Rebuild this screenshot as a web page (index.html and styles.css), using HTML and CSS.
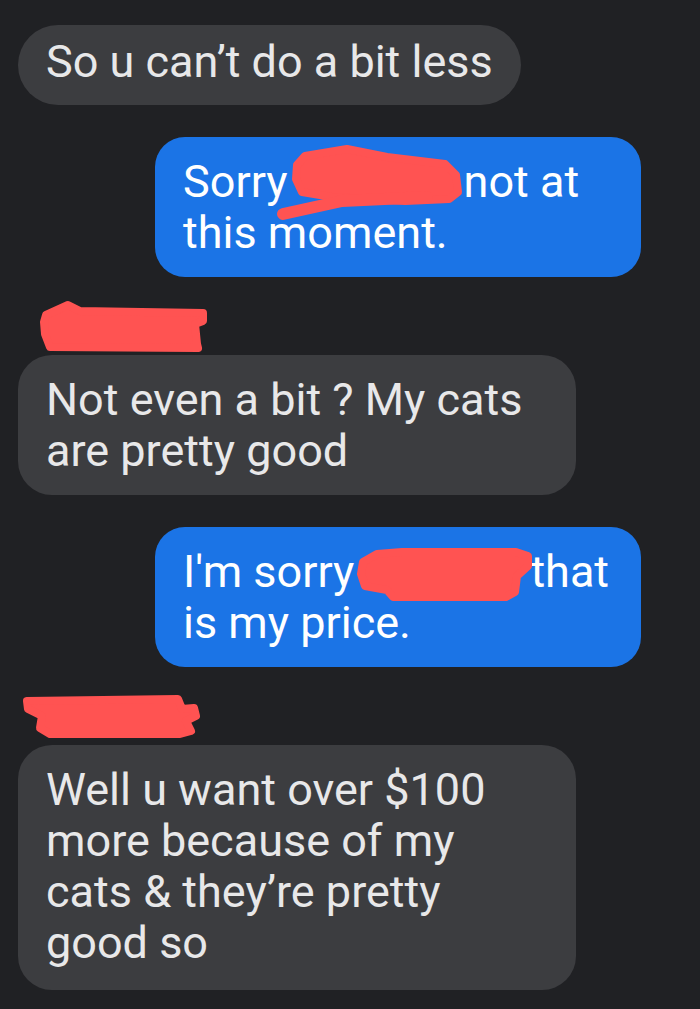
FILE: index.html
```html
<!DOCTYPE html>
<html lang="en">

<head>
    <meta charset="UTF-8">
    <meta name="viewport" content="width=device-width, initial-scale=1.0">
    <title>Messages</title>
    <link rel="stylesheet" href="styles.css">
</head>

<body>
    <div class="thread">
        <div class="msg in first">So u can’t do a bit less</div>

        <div class="msg out">Sorry<span class="redact r1"><svg viewBox="0 0 200 80" width="200" height="80">
                    <polygon points="25,21 33,12 75,5 115,13 173,20 184,31 186,48 177,55 133,57 60,53 30,48 24,35" />
                    <polyline points="11,70 70,57 155,53" fill="none" stroke-width="12" />
                </svg></span>not at<br>this moment.</div>

        <div class="sender s1"><svg viewBox="0 0 170 55" width="170" height="55">
                <polygon points="6,15 28,5 40,11 163,13 163,21 155,24 157,44 158,48 10,47 5,34 4,22" />
            </svg></div>

        <div class="msg in wide">Not even a bit ? My cats<br>are pretty good</div>

        <div class="msg out">I'm sorry<span class="redact r2"><svg viewBox="0 0 195 66" width="195" height="66">
                    <polygon points="17,21 31,13 56,11 170,11 182,15 182,25 171,35 169,51 160,56 47,56 41,49 19,45 15,33" />
                </svg></span>that<br>is my price.</div>

        <div class="sender s2"><svg viewBox="0 0 185 53" width="185" height="53">
                <polygon points="7,9 158,7 162,17 174,16 176,24 166,29 171,39 160,42 30,42 20,36 22,24 8,17" />
            </svg></div>

        <div class="msg in wide last">Well u want over $100<br>more because of my<br>cats &amp; they’re pretty<br>good so</div>
    </div>
</body>

</html>
```

FILE: styles.css
```css
body,
html {
    margin: 0;
    padding: 0;
    background-color: #202124;
    font-family: Roboto, "Noto Sans", sans-serif;
}

.thread {
    display: flex;
    flex-direction: column;
    align-items: flex-start;
    padding: 25px 59px 0 18px;
}

.msg {
    font-size: 45px;
    line-height: 51px;
    padding: 19px 28px;
    box-sizing: border-box;
    white-space: nowrap;
}

.msg + .msg {
    margin-top: 32px;
}

.msg.in {
    background-color: #3c3d40;
    color: #e8e8e9;
    border-radius: 34px;
}

.msg.first {
    padding: 11px 28px 18px;
    border-radius: 40px;
}

.msg.wide {
    width: 558px;
}

.msg.last {
    padding-bottom: 22px;
}

.msg.out {
    align-self: flex-end;
    width: 486px;
    background-color: #1b74e6;
    color: #ffffff;
    border-radius: 30px;
}

.redact {
    display: inline-block;
    position: relative;
    height: 30px;
}

.redact svg {
    position: absolute;
    fill: #ff5352;
    stroke: #ff5352;
    stroke-width: 8;
    stroke-linejoin: round;
    stroke-linecap: round;
}

.redact.r1 {
    width: 176px;
}

.redact.r1 svg {
    left: -16px;
    top: -23px;
}

.redact.r2 {
    width: 176px;
}

.redact.r2 svg {
    left: -8px;
    top: -16px;
}

.sender {
    height: 55px;
}

.sender svg {
    display: block;
    fill: #ff5352;
    stroke: #ff5352;
    stroke-width: 8;
    stroke-linejoin: round;
}

.sender.s1 {
    margin-top: 23px;
    padding-left: 22px;
}

.sender.s2 {
    margin-top: 25px;
    height: 53px;
    padding-left: 2px;
}
```
